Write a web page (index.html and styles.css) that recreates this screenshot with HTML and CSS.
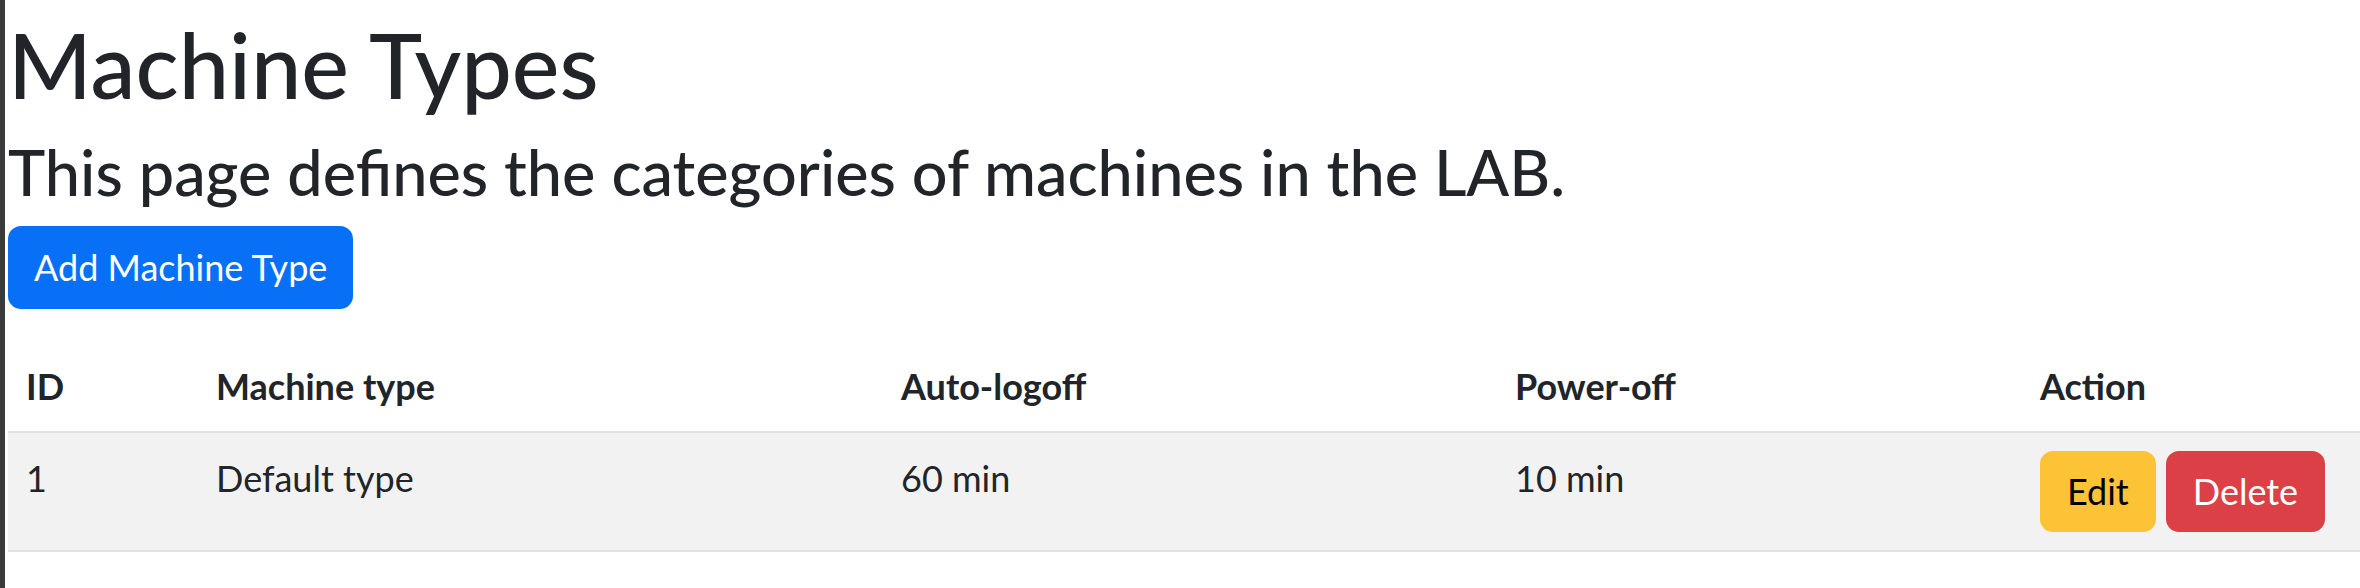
FILE: index.html
```html
<!DOCTYPE html>
<html lang="en">
<head>
<meta charset="utf-8">
<title>Machine Types</title>
<link rel="stylesheet" href="styles.css">
</head>
<body>
<main class="page">
  <h1 class="title">Machine Types</h1>
  <h3 class="subtitle">This page defines the categories of machines in the LAB.</h3>
  <button class="btn btn-primary" type="button">Add Machine Type</button>
  <table class="table">
    <colgroup>
      <col class="c-id">
      <col class="c-type">
      <col class="c-logoff">
      <col class="c-power">
      <col class="c-action">
    </colgroup>
    <thead>
      <tr>
        <th>ID</th>
        <th>Machine type</th>
        <th>Auto-logoff</th>
        <th>Power-off</th>
        <th>Action</th>
      </tr>
    </thead>
    <tbody>
      <tr class="striped">
        <td>1</td>
        <td>Default type</td>
        <td>60 min</td>
        <td>10 min</td>
        <td>
          <div class="actions">
            <button class="btn btn-sm btn-warning" type="button">Edit</button>
            <button class="btn btn-sm btn-danger" type="button">Delete</button>
          </div>
        </td>
      </tr>
    </tbody>
  </table>
</main>
</body>
</html>
```
FILE: styles.css
```css
html, body {
  margin: 0;
  padding: 0;
  background: #ffffff;
}
body {
  border-left: 5px solid #3a3a3a;
  min-height: 588px;
  box-sizing: border-box;
  font-family: Lato, "Open Sans", "Liberation Sans", sans-serif;
  font-size: 36px;
  line-height: 1.5;
  color: #212529;
}
.page {
  padding: 10px 0 0 3px;
}
.title {
  margin: 0 0 16px 0;
  font-size: 90px;
  font-weight: 500;
  line-height: 1.2;
}
.subtitle {
  margin: 0 0 16px 0;
  font-size: 63px;
  font-weight: 500;
  line-height: 1.2;
}
.btn {
  display: inline-block;
  font-family: inherit;
  font-size: 36px;
  line-height: 54px;
  font-weight: 400;
  padding: 12.5px 24px;
  border: 2px solid transparent;
  border-radius: 13px;
  cursor: pointer;
}
.btn-sm {
  padding: 11.5px 25px;
}
.btn-primary {
  background: #0870f7;
  border-color: #0870f7;
  color: #ffffff;
}
.btn-warning {
  background: #fdc336;
  border-color: #fdc336;
  color: #000000;
}
.btn-danger {
  background: #da4046;
  border-color: #da4046;
  color: #ffffff;
}
.table {
  margin-top: 32px;
  width: 100%;
  table-layout: fixed;
  border-collapse: collapse;
  vertical-align: top;
}
.c-id { width: 190px; }
.c-type { width: 685px; }
.c-logoff { width: 614px; }
.c-power { width: 525px; }
.table th,
.table td {
  padding: 18px;
  text-align: left;
  border-bottom: 2.25px solid #dee2e6;
}
.table th {
  font-weight: 700;
  vertical-align: bottom;
}
.table td {
  font-weight: 400;
  vertical-align: top;
}
.striped td {
  background: #f2f2f2;
}
.actions {
  display: flex;
  gap: 10px;
}
```
